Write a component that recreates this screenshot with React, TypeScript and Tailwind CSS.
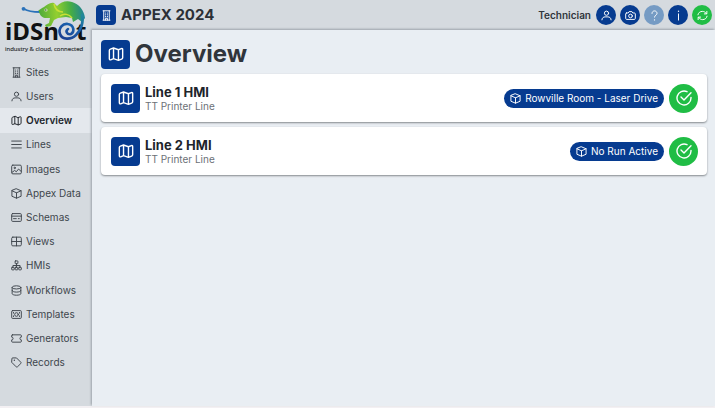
import { ReactNode } from "react";

type IconProps = { className?: string };

function Svg({ className = "size-3", children }: IconProps & { children: ReactNode }) {
  return (
    <svg
      className={`${className} shrink-0`}
      viewBox="0 0 24 24"
      fill="none"
      stroke="currentColor"
      strokeWidth={2.1}
      strokeLinecap="round"
      strokeLinejoin="round"
      aria-hidden="true"
    >
      {children}
    </svg>
  );
}

function BuildingIcon({ className }: IconProps) {
  return (
    <Svg className={className}>
      <path d="M4.500 1.800h15M4.500 22.200h15M6 2v20M18 2v20M10 22v-4h4v4" />
      <path d="M10 6.500h.1M14 6.500h.1M10 10.500h.1M14 10.500h.1M10 14.500h.1M14 14.500h.1" strokeWidth={2.600} />
    </Svg>
  );
}

function UserIcon({ className }: IconProps) {
  return (
    <Svg className={className}>
      <circle cx="12" cy="7" r="4.600" />
      <path d="M2 21.500c0-4.200 3.300-6.500 7-6.500h6c3.700 0 7 2.300 7 6.500" />
    </Svg>
  );
}

function MapIcon({ className }: IconProps) {
  return (
    <Svg className={className}>
      <path d="M8.300 3 3.600 4.800C2.500 5.200 2 5.700 2 6.800v12.400c0 1.300.8 1.900 2 1.500l4.300-1.700 7.400 2.600 4.700-1.800c1.100-.4 1.600-.9 1.600-2V5.400c0-1.300-.8-1.900-2-1.500l-4.300 1.700zM8.300 3v16M15.700 5.600v16" />
    </Svg>
  );
}

function BarsIcon({ className }: IconProps) {
  return (
    <Svg className={className}>
      <path d="M1.500 4.500h21M1.500 12h21M1.500 19.500h21" />
    </Svg>
  );
}

function ImageIcon({ className }: IconProps) {
  return (
    <Svg className={className}>
      <rect x="1.500" y="2.500" width="21" height="19" rx="2.500" />
      <circle cx="8" cy="8.500" r="1.500" />
      <path d="m2 18.500 6-4.500 3.500 3 5-6 5.500 5" />
    </Svg>
  );
}

function BoxIcon({ className }: IconProps) {
  return (
    <Svg className={className}>
      <path d="M12 1.800 22 6v12l-10 4.200L2 18V6zM2 6l10 4.500L22 6M12 10.500v11.700" />
    </Svg>
  );
}

function CardIcon({ className }: IconProps) {
  return (
    <Svg className={className}>
      <rect x="1.500" y="3.500" width="21" height="17" rx="2" />
      <path d="M1.500 9h21M5.500 14.500h6M16 14.500h2" />
    </Svg>
  );
}

function TableIcon({ className }: IconProps) {
  return (
    <Svg className={className}>
      <rect x="1.500" y="2.500" width="21" height="19" rx="2.500" />
      <path d="M1.500 12h21M12 2.500v19" />
    </Svg>
  );
}

function SitemapIcon({ className }: IconProps) {
  return (
    <Svg className={className}>
      <rect x="9" y="2" width="6" height="6" rx="1" />
      <rect x="1.500" y="16" width="5.500" height="5.500" rx="1" />
      <rect x="9.200" y="16" width="5.500" height="5.500" rx="1" />
      <rect x="17" y="16" width="5.500" height="5.500" rx="1" />
      <path d="M12 8v8M4.200 16v-4h15.600v4" />
    </Svg>
  );
}

function DatabaseIcon({ className }: IconProps) {
  return (
    <Svg className={className}>
      <ellipse cx="12" cy="5.200" rx="9.500" ry="3.500" />
      <path d="M2.500 5.200v13.600c0 2 4.300 3.500 9.500 3.500s9.500-1.500 9.500-3.500V5.200M2.500 12c0 2 4.300 3.500 9.500 3.500s9.500-1.500 9.500-3.500" />
    </Svg>
  );
}

function MoneyIcon({ className }: IconProps) {
  return (
    <Svg className={className}>
      <rect x="1.500" y="3.500" width="21" height="17" rx="2" />
      <circle cx="12" cy="12" r="4" />
      <path d="M5.500 7.500v1.500M18.500 7.500v1.500M5.500 15v1.500M18.500 15v1.500" />
    </Svg>
  );
}

function TicketIcon({ className }: IconProps) {
  return (
    <Svg className={className}>
      <path d="M3 4h18c.9 0 1.500.6 1.500 1.500V9a3 3 0 0 0 0 6v3.500c0 .9-.6 1.500-1.500 1.500H3c-.9 0-1.500-.6-1.500-1.500V15a3 3 0 0 0 0-6V5.500C1.500 4.600 2.100 4 3 4z" />
    </Svg>
  );
}

function TagIcon({ className }: IconProps) {
  return (
    <Svg className={className}>
      <path d="M2 3.500C2 2.500 2.500 2 3.500 2H12l9.500 9.500c.9.900.9 1.700 0 2.600L14 21.500c-.9.9-1.700.9-2.600 0L2 12z" />
      <path d="M7.200 7.200h.1" strokeWidth={3} />
    </Svg>
  );
}

function CameraIcon({ className }: IconProps) {
  return (
    <Svg className={className}>
      <path d="M3.500 6.500H7L9 3.500h6l2 3h3.500c1.200 0 2 .8 2 2v10c0 1.200-.8 2-2 2h-17c-1.200 0-2-.8-2-2v-10c0-1.200.8-2 2-2z" />
      <circle cx="12" cy="13" r="4" />
    </Svg>
  );
}

function QuestionIcon({ className }: IconProps) {
  return (
    <Svg className={className}>
      <path d="M6.500 7.500C6.500 4.300 9 2 12 2s5.500 2.300 5.500 5.300c0 3.700-5.500 4.200-5.500 8.200" />
      <path d="M12 21.500v.1" strokeWidth={2.800} />
    </Svg>
  );
}

function InfoIcon({ className }: IconProps) {
  return (
    <Svg className={className}>
      <path d="M12 8.500V22" />
      <path d="M12 2.500v.1" strokeWidth={3} />
    </Svg>
  );
}

function SyncIcon({ className }: IconProps) {
  return (
    <Svg className={className}>
      <path d="M2 10.500C2.800 6 6.900 3 11.500 3c4 0 7.300 2 9 5M21.500 3v5.500H16M22 13.500c-.8 4.500-4.900 7.500-9.500 7.500-4 0-7.300-2-9-5M2.500 21v-5.500H8" />
    </Svg>
  );
}

function CheckCircleIcon({ className }: IconProps) {
  return (
    <Svg className={className}>
      <path d="M22.500 11v1A10.500 10.500 0 1 1 16.500 2.500" />
      <path d="m7.500 10.500 4.500 4.500L22.500 4" />
    </Svg>
  );
}

function Logo() {
  return (
    <svg viewBox="0 0 92 56" className="h-14 w-full" role="img" aria-label="iDSnet industry & cloud, connected">
      <defs>
        <linearGradient id="skin" gradientUnits="userSpaceOnUse" x1="38" y1="14" x2="85" y2="10">
          <stop offset="0" stopColor="#4aa83c" />
          <stop offset=".4" stopColor="#93cf2f" />
          <stop offset=".7" stopColor="#45ad45" />
          <stop offset="1" stopColor="#1c7f9d" />
        </linearGradient>
        <linearGradient id="tail" gradientUnits="userSpaceOnUse" x1="80" y1="14" x2="64" y2="40">
          <stop offset="0" stopColor="#21899a" />
          <stop offset=".45" stopColor="#1a62ae" />
          <stop offset="1" stopColor="#1b3f8f" />
        </linearGradient>
      </defs>
      <text x="5" y="40" fontFamily="Open Sans, sans-serif" fontWeight="700" fontSize="24" fill="#101214">
        iDSn
      </text>
      <text x="76" y="40" fontFamily="Open Sans, sans-serif" fontWeight="700" fontSize="24" fill="#101214">
        t
      </text>
      {/* tongue */}
      <path d="M24 9c5 3 10 3 16 3" fill="none" stroke="#2b72ba" strokeWidth="1.800" strokeLinecap="round" />
      <circle cx="23.500" cy="8.800" r="1.900" fill="#2b72ba" />
      {/* body and legs */}
      <path
        d="M38 11c2-2 4-3 6-4 3-2 6-5 10-4l3 3c4-4 9-6 15-4 7 2 12 8 13 16l-3 4-4-3-5 3-1-4-6-1-8 1-4 2-3 6-5 1-1-2 4-2 1-5-5 0c-3 0-6-4-6-7z"
        fill="url(#skin)"
      />
      <path d="M54 4c1 5 4 8 9 8M60 16c4-3 9-2 12 2" fill="none" stroke="#c9df35" strokeWidth="1.500" />
      <circle cx="46" cy="10" r="1.600" fill="#d9efab" />
      <circle cx="45.800" cy="10" r=".7" fill="#193842" />
      {/* curled tail */}
      <path
        d="M82 15c2 7-1 15-6 20-5 5-14 5-16-1-2-6 3-11 8-10 6 1 7 8 3 10-4 1-6-3-3-5"
        fill="none"
        stroke="url(#tail)"
        strokeWidth="2.600"
        strokeLinecap="round"
      />
      <text x="5" y="51" fontFamily="Open Sans, sans-serif" fontSize="6" fill="#2a2d30" stroke="#2a2d30" strokeWidth=".15">
        industry & cloud, connected
      </text>
    </svg>
  );
}

const menu = [
  { label: "Sites", icon: BuildingIcon },
  { label: "Users", icon: UserIcon },
  { label: "Overview", icon: MapIcon, active: true },
  { label: "Lines", icon: BarsIcon },
  { label: "Images", icon: ImageIcon },
  { label: "Appex Data", icon: BoxIcon },
  { label: "Schemas", icon: CardIcon },
  { label: "Views", icon: TableIcon },
  { label: "HMIs", icon: SitemapIcon },
  { label: "Workflows", icon: DatabaseIcon },
  { label: "Templates", icon: MoneyIcon },
  { label: "Generators", icon: TicketIcon },
  { label: "Records", icon: TagIcon },
];

const actions = [
  { label: "Account", icon: UserIcon, color: "bg-[#063b90]" },
  { label: "Camera", icon: CameraIcon, color: "bg-[#063b90]" },
  { label: "Help", icon: QuestionIcon, color: "bg-[#759bc4]", disabled: true },
  { label: "Information", icon: InfoIcon, color: "bg-[#063b90]" },
  { label: "Refresh", icon: SyncIcon, color: "bg-[#20bd45]" },
];

const lines = [
  { name: "Line 1 HMI", type: "TT Printer Line", run: "Rowville Room - Laser Drive" },
  { name: "Line 2 HMI", type: "TT Printer Line", run: "No Run Active" },
];

function Sidebar() {
  return (
    <aside className="w-[92px] shrink-0">
      <Logo />
      <nav className="mt-1">
        <ul className="grid h-[315px] auto-rows-fr">
          {menu.map(({ label, icon: Icon, active }) => (
            <li key={label} className="flex">
              <a
                href="#"
                aria-current={active ? "page" : undefined}
                className={`flex w-full items-center gap-1 pl-[11px] text-[10px] whitespace-nowrap ${
                  active ? "bg-[#e4e8ed] font-semibold text-[#20242b]" : "text-[#40464d]"
                }`}
              >
                <Icon className="size-[11px]" />
                {label}
              </a>
            </li>
          ))}
        </ul>
      </nav>
    </aside>
  );
}

function Header() {
  return (
    <header className="flex h-[30px] shrink-0 items-center pr-[3px] pl-1">
      <span className="flex size-5 items-center justify-center rounded bg-[#063b90] text-white">
        <BuildingIcon className="size-[11px]" />
      </span>
      <h2 className="ml-[5px] text-[15px] font-bold text-[#2b3036]">APPEX 2024</h2>
      <span className="mr-[5px] ml-auto text-[10px] font-semibold text-[#30353b]">Technician</span>
      <div className="flex gap-1">
        {actions.map(({ label, icon: Icon, color, disabled }) => (
          <button
            key={label}
            type="button"
            aria-label={label}
            disabled={disabled}
            className={`flex size-5 items-center justify-center rounded-full text-white ${color}`}
          >
            <Icon className="size-[11px]" />
          </button>
        ))}
      </div>
    </header>
  );
}

export default function App() {
  return (
    <div className="flex min-h-screen flex-col bg-[#f3f0f3] pb-0.5 font-[Inter,sans-serif]">
      <div className="flex flex-1 bg-[#d5dadf]">
        <Sidebar />
        <div className="flex min-w-0 flex-1 flex-col">
          <Header />
          <main className="flex-1 bg-[#e9eef3] pt-2 pr-2 pl-[9px] shadow-[-1px_-1px_2px_#9ca3aa]">
            <div className="flex h-8 items-center gap-[5px]">
              <span className="flex size-[29px] items-center justify-center rounded bg-[#063b90] text-white">
                <MapIcon className="size-4" />
              </span>
              <h1 className="text-2xl font-bold text-[#30353b]">Overview</h1>
            </div>

            <div className="mt-1 flex flex-col gap-[5px]">
              {lines.map((line) => (
                <article
                  key={line.name}
                  className="flex h-12 items-center rounded bg-white pr-[9px] pl-[10px] shadow-[0_1px_2px_#85898e]"
                >
                  <span className="flex size-[29px] items-center justify-center rounded bg-[#063b90] text-white">
                    <MapIcon className="size-4" />
                  </span>
                  <div className="ml-[5px] min-w-0 flex-1">
                    <h3 className="text-[13px] leading-4 font-bold text-[#20242b]">{line.name}</h3>
                    <p className="text-[10px] leading-3 text-[#6c7177]">{line.type}</p>
                  </div>
                  <span className="flex h-[19px] items-center gap-1 rounded-full bg-[#063b90] px-1.5 text-[10px] text-white">
                    <BoxIcon className="size-[11px]" />
                    {line.run}
                  </span>
                  <button
                    type="button"
                    aria-label={`${line.name} status`}
                    className="ml-[5px] flex size-[29px] items-center justify-center rounded-full bg-[#20bd45] text-white"
                  >
                    <CheckCircleIcon className="size-4" />
                  </button>
                </article>
              ))}
            </div>
          </main>
        </div>
      </div>
    </div>
  );
}
